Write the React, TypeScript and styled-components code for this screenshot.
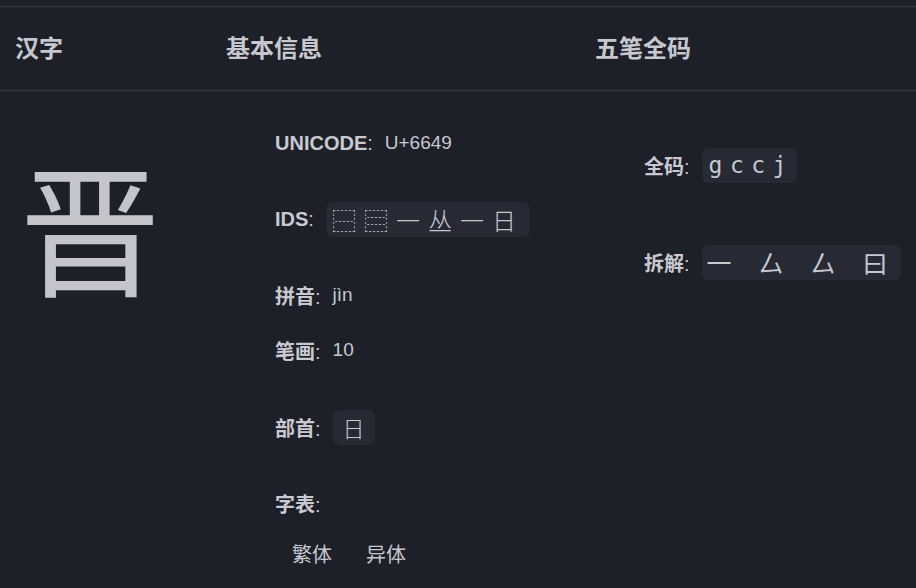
import React from "react";
import styled, { createGlobalStyle } from "styled-components";

const GlobalStyle = createGlobalStyle`
  html, body {
    margin: 0;
    padding: 0;
    background: #1e2029;
  }
  body {
    font-family: "Liberation Sans", "Noto Sans CJK SC", sans-serif;
    color: #c6c8ce;
  }
`;

const Page = styled.div`
  width: 916px;
  height: 588px;
  overflow: hidden;
  padding-top: 6px;
  box-sizing: border-box;
`;

const Table = styled.div`
  display: grid;
  grid-template-columns: 211px 369px 1fr;
  border-top: 1px solid #353741;
`;

const HeadCell = styled.div`
  height: 84px;
  box-sizing: border-box;
  display: flex;
  align-items: center;
  padding: 0 0 4px 15px;
  font-size: 24px;
  font-weight: 700;
  border-bottom: 1px solid #353741;
`;

const CharCell = styled.div`
  padding: 41px 0 0 19px;
`;

const BigChar = styled.div`
  font-family: "Noto Sans CJK SC", sans-serif;
  font-size: 142px;
  font-weight: 400;
  line-height: 1.3;
  color: #c3c5cb;
`;

const InfoCell = styled.div<{ $top: number }>`
  display: flex;
  flex-direction: column;
  padding: ${({ $top }) => $top}px 0 0 64px;
`;

const Row = styled.div<{ $mt?: number }>`
  display: flex;
  align-items: center;
  height: 36px;
  margin-top: ${({ $mt }) => $mt ?? 0}px;
  gap: 12px;
`;

const Label = styled.span`
  font-size: 20px;
  font-weight: 700;
  color: #c8cad0;

  i {
    font-style: normal;
    font-weight: 400;
  }
`;

const Value = styled.span`
  font-size: 19px;
`;

const Chip = styled.span`
  display: flex;
  align-items: center;
  height: 35px;
  box-sizing: border-box;
  border-radius: 7px;
  background: #272935;
`;

const IdsChip = styled(Chip)`
  gap: 8px;
  padding: 0 14px 0 6px;
  font-family: "Noto Sans CJK SC", sans-serif;
  font-size: 24px;
  font-weight: 300;
`;

const RadicalChip = styled(Chip)`
  padding: 0 10px;
  font-family: "Noto Sans CJK SC", sans-serif;
  font-size: 22px;
  font-weight: 300;
`;

const CodeChip = styled(Chip)`
  padding: 0 3px 0 7px;
  font-family: "DejaVu Sans Mono", monospace;
  font-size: 23px;
  letter-spacing: 7.5px;
`;

const RootChip = styled(Chip)`
  gap: 27px;
  padding: 0 13px 0 5px;
  font-family: "Noto Sans CJK SC", sans-serif;
  font-size: 25px;
`;

const VariantRow = styled(Row)`
  gap: 0;
`;

const Variant = styled.span`
  padding: 0 17px;
  font-family: "Noto Sans CJK SC", sans-serif;
  font-size: 20px;
`;

const ids = ["⿱", "⿳", "一", "丛", "一", "日"];
const roots = ["一", "厶", "厶", "曰"];

export default function App() {
  return (
    <Page>
      <GlobalStyle />
      <Table>
        <HeadCell>汉字</HeadCell>
        <HeadCell>基本信息</HeadCell>
        <HeadCell>五笔全码</HeadCell>

        <CharCell>
          <BigChar>晋</BigChar>
        </CharCell>

        <InfoCell $top={34}>
          <Row>
            <Label>
              UNICODE<i>:</i>
            </Label>
            <Value>U+6649</Value>
          </Row>
          <Row $mt={40}>
            <Label>
              IDS<i>:</i>
            </Label>
            <IdsChip>
              {ids.map((c, i) => (
                <span key={i}>{c}</span>
              ))}
            </IdsChip>
          </Row>
          <Row $mt={40}>
            <Label>
              拼音<i>:</i>
            </Label>
            <Value>jìn</Value>
          </Row>
          <Row $mt={19}>
            <Label>
              笔画<i>:</i>
            </Label>
            <Value>10</Value>
          </Row>
          <Row $mt={41}>
            <Label>
              部首<i>:</i>
            </Label>
            <RadicalChip>日</RadicalChip>
          </Row>
          <Row $mt={40}>
            <Label>
              字表<i>:</i>
            </Label>
          </Row>
          <VariantRow $mt={14}>
            <Variant>繁体</Variant>
            <Variant>异体</Variant>
          </VariantRow>
        </InfoCell>

        <InfoCell $top={56}>
          <Row>
            <Label>
              全码<i>:</i>
            </Label>
            <CodeChip>gccj</CodeChip>
          </Row>
          <Row $mt={61}>
            <Label>
              拆解<i>:</i>
            </Label>
            <RootChip>
              {roots.map((c, i) => (
                <span key={i}>{c}</span>
              ))}
            </RootChip>
          </Row>
        </InfoCell>
      </Table>
    </Page>
  );
}
